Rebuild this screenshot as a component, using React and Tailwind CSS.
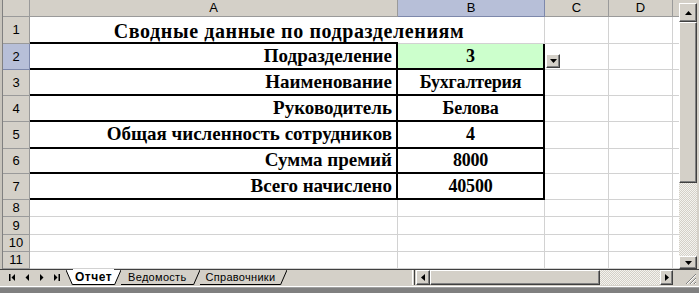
import React from "react";

const grid = "border-r border-b border-[#d2d2d2]";
const hdr = "border-r border-b border-[#9a9a9a] bg-[#d4d0c8] flex items-center justify-center text-[13px] text-black";
const hdrSel = "border-r border-b border-[#7d88ab] bg-[#b7bfd8] flex items-center justify-center text-[13px] text-black";
const btn3d = "bg-[#d4d0c8] border border-t-white border-l-white border-r-[#404040] border-b-[#404040] shadow-[inset_-1px_-1px_#808080] flex items-center justify-center";
const dotted = "bg-[repeating-conic-gradient(#d4d0c8_0%_25%,#f4f3ef_0%_50%)] bg-[length:2px_2px]";
const title = "font-bold text-[20px] tracking-[0.6px] text-black whitespace-nowrap";
const label = "font-bold text-[19px] text-black whitespace-nowrap";
const value = "font-bold text-[18px] tracking-[-0.2px] text-black whitespace-nowrap";

const rowHeights = [27, 26, 26, 26, 27, 25, 26, 17, 18, 17, 17];

const labels = [
  "Подразделение",
  "Наименование",
  "Руководитель",
  "Общая численность сотрудников",
  "Сумма премий",
  "Всего начислено",
];
const values = ["3", "Бухгалтерия", "Белова", "4", "8000", "40500"];

const Tri = ({ dir = "down" }) => (
  <svg width="7" height="4" viewBox="0 0 7 4">
    {dir === "down" ? <path d="M0 0h7L3.5 4z" fill="#000" /> : <path d="M0 4h7L3.5 0z" fill="#000" />}
  </svg>
);

const Nav = ({ type }) => (
  <svg width="7" height="7" viewBox="0 0 7 7">
    {type === "first" && (
      <>
        <rect x="0" y="0" width="1.5" height="7" fill="#000" />
        <path d="M6 0v7L2.5 3.5z" fill="#000" />
      </>
    )}
    {type === "prev" && <path d="M5 0v7L1.5 3.5z" fill="#000" />}
    {type === "next" && <path d="M2 0v7l3.5-3.5z" fill="#000" />}
    {type === "last" && (
      <>
        <path d="M1 0v7l3.5-3.5z" fill="#000" />
        <rect x="5.5" y="0" width="1.5" height="7" fill="#000" />
      </>
    )}
  </svg>
);

const Slant = ({ dir, active }) => (
  <svg width="7" height="16" viewBox="0 0 7 16" className="shrink-0">
    {dir === "left" ? (
      <>
        {active && <path d="M0 0H7V16z" fill="#fff" />}
        <path d="M0 0L7 16" stroke="#000" strokeWidth="1" />
      </>
    ) : (
      <>
        {active && <path d="M0 0H7L0 16z" fill="#fff" />}
        <path d="M7 0L0 16" stroke="#000" strokeWidth="1" />
      </>
    )}
  </svg>
);

export default function App() {
  const serif = { fontFamily: '"Liberation Serif", "Times New Roman", serif' };

  const cells = [];
  // header row
  cells.push(<div key="corner" className={hdr} />);
  cells.push(<div key="hA" className={hdr}>A</div>);
  cells.push(<div key="hB" className={hdrSel}>B</div>);
  cells.push(<div key="hC" className={hdr}>C</div>);
  cells.push(<div key="hD" className={hdr}>D</div>);
  cells.push(<div key="hE" className="bg-[#d4d0c8] border-b border-[#9a9a9a]" />);

  rowHeights.forEach((h, i) => {
    const n = i + 1;
    cells.push(
      <div key={"r" + n} className={n === 2 ? hdrSel : hdr}>
        {n}
      </div>
    );
    if (n === 1) {
      // merged A1:B1, thick border under A only
      cells.push(
        <div
          key="a1"
          className={
            "col-span-2 border-r border-[#d2d2d2] flex items-center justify-center pl-[4px] bg-no-repeat bg-left-bottom " +
            "bg-[linear-gradient(#000,#000),linear-gradient(#d2d2d2,#d2d2d2)] bg-[length:368px_2px,100%_1px] " +
            title
          }
          style={serif}
        >
          Сводные данные по подразделениям
        </div>
      );
    } else if (n >= 2 && n <= 7) {
      cells.push(
        <div
          key={"a" + n}
          className={"border-b-2 border-r-2 border-black flex items-center justify-end pr-[4px] " + label}
          style={serif}
        >
          {labels[n - 2]}
        </div>
      );
      cells.push(
        <div
          key={"b" + n}
          className={
            "border-b-2 border-r-2 border-black flex items-center justify-center " +
            value +
            (n === 2 ? " bg-[#ccffcc]" : "")
          }
          style={serif}
        >
          {values[n - 2]}
        </div>
      );
    } else {
      cells.push(<div key={"a" + n} className={grid} />);
      cells.push(<div key={"b" + n} className={grid} />);
    }
    cells.push(
      <div key={"c" + n} className={grid + (n === 2 ? " flex items-end pl-[1px] pb-[1px]" : "")}>
        {n === 2 && (
          <div className={btn3d + " w-[14px] h-[14px]"}>
            <Tri />
          </div>
        )}
      </div>
    );
    cells.push(<div key={"d" + n} className={grid} />);
    cells.push(<div key={"e" + n} className="border-b border-[#d2d2d2]" />);
  });

  return (
    <div
      className="w-[699px] h-[293px] bg-[#d4d0c8] flex flex-col overflow-hidden"
      style={{ fontFamily: '"Liberation Sans", Arial, sans-serif' }}
    >
      <div className="flex h-[269px]">
        <div className="w-[2px] bg-[#c8c4bc]" />
        <div className="w-[1px] bg-[#808080]" />
        <div className="w-[676px] bg-white grid grid-cols-[27px_368px_147px_64px_64px_6px] grid-rows-[17px_27px_26px_26px_26px_27px_25px_26px_17px_18px_17px_17px]">
          {cells}
        </div>
        <div className="w-[18px] flex flex-col pt-[3px]">
          <div className={btn3d + " h-[19px]"}>
            <Tri dir="up" />
          </div>
          <div className={btn3d + " h-[161px]"} />
          <div className={"flex-1 " + dotted} />
          <div className={btn3d + " h-[13px]"}>
            <Tri />
          </div>
        </div>
        <div className="w-[2px]" />
      </div>

      <div className="flex h-[16px] border-t border-[#404040] text-[11px] tracking-[0.3px] text-black">
        <div className="w-[3px]" />
        <div className="w-[63px] flex items-center justify-around px-[2px]">
          <Nav type="first" />
          <Nav type="prev" />
          <Nav type="next" />
          <Nav type="last" />
        </div>
        <Slant dir="left" active />
        <div className="bg-white px-[2px] text-[12px] tracking-[0.5px] font-bold flex items-center -mt-[1px] border-b border-black">
          Отчет
        </div>
        <Slant dir="right" active />
        <div className="px-[7px] flex items-center border-b border-black">Ведомость</div>
        <Slant dir="right" />
        <div className="px-[5px] flex items-center border-b border-black">Справочники</div>
        <Slant dir="right" />
        <div className="flex-1" />
        <div className="w-[3px] bg-[#d4d0c8] border-l border-white border-r border-r-[#404040]" />
        <div className={btn3d + " w-[14px] ml-[1px]"}>
          <svg width="4" height="7" viewBox="0 0 4 7">
            <path d="M4 0v7L0 3.5z" fill="#000" />
          </svg>
        </div>
        <div className={btn3d + " w-[170px]"} />
        <div className={"w-[60px] " + dotted} />
        <div className={btn3d + " w-[13px]"}>
          <svg width="4" height="7" viewBox="0 0 4 7">
            <path d="M0 0v7l4-3.5z" fill="#000" />
          </svg>
        </div>
        <div className="w-[6px]" />
        <div className="w-[18px] flex items-end justify-end">
          <svg width="12" height="12" viewBox="0 0 12 12">
            <path d="M11 1L1 11M11 5L5 11M11 9L9 11" stroke="#808080" strokeWidth="1" />
            <path d="M11 2L2 11M11 6L6 11M11 10L10 11" stroke="#fff" strokeWidth="1" />
          </svg>
        </div>
        <div className="w-[2px]" />
      </div>
      <div className="h-[2px] bg-[#d4d0c8] border-b border-white" />
      <div className="flex-1 bg-[#808080] border-t border-[#a0a0a0]" />
    </div>
  );
}
